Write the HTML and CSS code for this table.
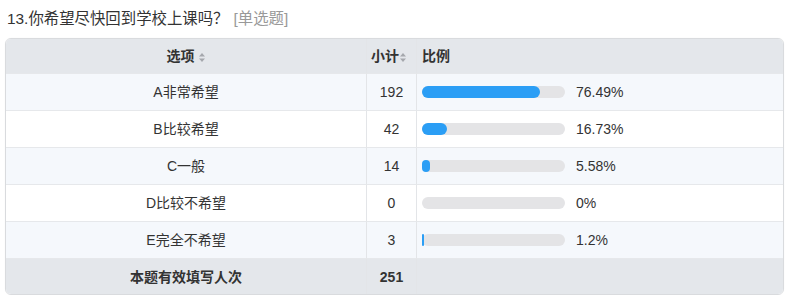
FILE: index.html
```html
<!DOCTYPE html>
<html lang="zh-CN">
<head>
<meta charset="utf-8">
<title>统计</title>
<link rel="stylesheet" href="styles.css">
</head>
<body>
<div class="question">
  <div class="title">13.你希望尽快回到学校上课吗？<span class="type">[单选题]</span></div>
  <table class="stats">
    <thead>
      <tr>
        <th class="c-opt">选项 <svg class="sort" width="6" height="9" viewBox="0 0 6 9"><path d="M3 0L6 3.5H0Z"/><path d="M3 9L6 5.5H0Z"/></svg></th>
        <th class="c-num">小计<svg class="sort" width="6" height="9" viewBox="0 0 6 9"><path d="M3 0L6 3.5H0Z"/><path d="M3 9L6 5.5H0Z"/></svg></th>
        <th class="c-pct">比例</th>
      </tr>
    </thead>
    <tbody>
      <tr class="alt">
        <td class="c-opt">A非常希望</td>
        <td class="c-num">192</td>
        <td class="c-pct"><div class="pct"><div class="track"><div class="fill" style="width:118px"></div></div><span class="val">76.49%</span></div></td>
      </tr>
      <tr>
        <td class="c-opt">B比较希望</td>
        <td class="c-num">42</td>
        <td class="c-pct"><div class="pct"><div class="track"><div class="fill" style="width:25px"></div></div><span class="val">16.73%</span></div></td>
      </tr>
      <tr class="alt">
        <td class="c-opt">C一般</td>
        <td class="c-num">14</td>
        <td class="c-pct"><div class="pct"><div class="track"><div class="fill" style="width:8px"></div></div><span class="val">5.58%</span></div></td>
      </tr>
      <tr>
        <td class="c-opt">D比较不希望</td>
        <td class="c-num">0</td>
        <td class="c-pct"><div class="pct"><div class="track"><div class="fill" style="width:0px"></div></div><span class="val">0%</span></div></td>
      </tr>
      <tr class="alt">
        <td class="c-opt">E完全不希望</td>
        <td class="c-num">3</td>
        <td class="c-pct"><div class="pct"><div class="track"><div class="fill" style="width:2px"></div></div><span class="val">1.2%</span></div></td>
      </tr>
    </tbody>
    <tfoot>
      <tr>
        <td class="c-opt">本题有效填写人次</td>
        <td class="c-num">251</td>
        <td class="c-pct"></td>
      </tr>
    </tfoot>
  </table>
</div>
</body>
</html>
```

FILE: styles.css
```css
* { box-sizing: border-box; }
html, body {
  margin: 0;
  padding: 0;
  background: #ffffff;
}
body {
  font-family: "Liberation Sans", "Noto Sans CJK SC", sans-serif;
  color: #333333;
  font-size: 14px;
}
.question {
  padding: 9px 0 0 5px;
  width: 784px;
}
.title {
  font-size: 15.4px;
  line-height: 20px;
  padding-left: 2px;
  margin-bottom: 9px;
  color: #333;
}
.type {
  color: #999999;
  margin-left: 5px;
}
.stats {
  width: 779px;
  table-layout: fixed;
  border-collapse: separate;
  border-spacing: 0;
  border: 1px solid #d9dbde;
  border-radius: 6px;
  overflow: hidden;
  box-shadow: 0 0 1px rgba(0,0,0,0.08);
}
.stats th, .stats td {
  padding: 0;
  border-bottom: 1px solid #e6e8eb;
  border-right: 1px solid #e3e5e8;
  vertical-align: middle;
  line-height: 20px;
}
.stats th.c-pct, .stats td.c-pct { border-right: none; }
.stats thead th {
  height: 35px;
  background: #e4e7eb;
  font-weight: bold;
  color: #333;
}
.stats th.c-opt { width: 361px; text-align: center; }
.stats th.c-num { width: 50px; text-align: left; padding-left: 4px; }
.stats th.c-pct { text-align: left; padding-left: 5px; }
.sort {
  fill: #a5a8ad;
  vertical-align: -1px;
  margin-left: 1px;
}
.stats tbody td {
  height: 37px;
  background: #ffffff;
}
.stats tbody tr.alt td { background: #f5f8fc; }
.stats td.c-opt { text-align: center; }
.stats td.c-num { text-align: center; }
.stats td.c-pct { padding-left: 5px; }
.pct {
  display: flex;
  align-items: center;
}
.track {
  width: 143px;
  height: 12px;
  border-radius: 6px;
  background: #e4e4e6;
  flex: none;
}
.fill {
  height: 12px;
  border-radius: 6px;
  background: #2b9ef5;
}
.val {
  margin-left: 11px;
  font-size: 14px;
  color: #333;
}
.stats tfoot td {
  height: 35px;
  border-bottom: none;
  background: #e4e7eb;
  font-weight: bold;
}
```
